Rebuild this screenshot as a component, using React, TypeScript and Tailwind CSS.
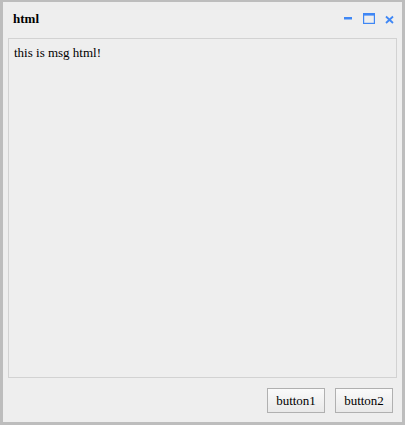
import React from "react";

export default function App() {
  return (
    <div
      className="w-[405px] h-[425px] bg-[#bdbdbd] pt-[2px] pl-[3px] overflow-hidden"
      style={{ fontFamily: '"Liberation Serif", "Times New Roman", serif' }}
    >
      <div className="w-[399px] h-[420px] bg-[#eeeeee] flex flex-col">
        <div className="h-[36px] flex items-start pl-[10px] pr-[8px] shrink-0">
          <span className="text-[13px] font-bold text-black leading-[13px] mt-[10px]">html</span>
          <div className="ml-auto flex items-start mt-[11px]">
            <svg width="8" height="11" viewBox="0 0 8 11" className="mr-[11px]">
              <rect x="0" y="4" width="8" height="2.5" fill="#3f87f5" />
            </svg>
            <svg width="12" height="11" viewBox="0 0 12 11" className="mr-[10px]">
              <rect x="0.6" y="0.6" width="10.8" height="9.8" fill="none" stroke="#3f87f5" strokeWidth="1.2" />
              <rect x="0" y="0" width="12" height="2.6" fill="#3f87f5" />
            </svg>
            <svg width="9" height="11" viewBox="0 0 9 11">
              <path d="M1 3.5 L8 10 M8 3.5 L1 10" stroke="#3f87f5" strokeWidth="1.8" />
            </svg>
          </div>
        </div>
        <div className="mx-[5px] flex-1 border border-[#d2d2d2] bg-[#eeeeee] px-[5px] pt-[6px]">
          <span className="text-[13px] text-black leading-[15px] block">this is msg html!</span>
        </div>
        <div className="h-[44px] shrink-0 flex justify-end items-start pt-[10px] pr-[9px] gap-[10px]">
          <button className="w-[58px] h-[25px] border border-[#b0b0b0] bg-gradient-to-b from-[#fafafa] to-[#e9e9e9] text-[13px] text-black leading-none">
            button1
          </button>
          <button className="w-[58px] h-[25px] border border-[#b0b0b0] bg-gradient-to-b from-[#fafafa] to-[#e9e9e9] text-[13px] text-black leading-none">
            button2
          </button>
        </div>
      </div>
    </div>
  );
}
